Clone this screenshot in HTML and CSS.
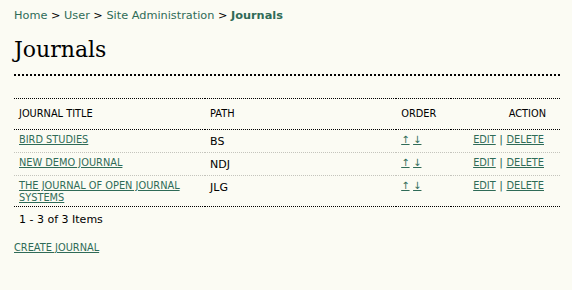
FILE: index.html
```html
<!DOCTYPE html>
<html lang="en">
<head>
    <meta charset="UTF-8">
    <title>Journals</title>
    <link rel="stylesheet" href="styles.css">
</head>
<body>
    <div id="main">
        <div id="breadcrumb">
            <a href="#">Home</a> &gt;
            <a href="#">User</a> &gt;
            <a href="#">Site Administration</a> &gt;
            <a href="#" class="current">Journals</a>
        </div>
        <h2>Journals</h2>

        <table class="listing">
            <thead>
                <tr class="heading">
                    <td class="col-title">Journal Title</td>
                    <td class="col-path">Path</td>
                    <td class="col-order">Order</td>
                    <td class="col-action">Action</td>
                </tr>
            </thead>
            <tbody>
                <tr>
                    <td><a href="#" class="action">Bird Studies</a></td>
                    <td class="path">BS</td>
                    <td><a href="#" class="arrow">&uarr;</a> <a href="#" class="arrow">&darr;</a></td>
                    <td class="actions"><a href="#" class="action">Edit</a> | <a href="#" class="action">Delete</a></td>
                </tr>
                <tr>
                    <td><a href="#" class="action">New Demo Journal</a></td>
                    <td class="path">NDJ</td>
                    <td><a href="#" class="arrow">&uarr;</a> <a href="#" class="arrow">&darr;</a></td>
                    <td class="actions"><a href="#" class="action">Edit</a> | <a href="#" class="action">Delete</a></td>
                </tr>
                <tr class="last">
                    <td><a href="#" class="action">The Journal of Open Journal Systems</a></td>
                    <td class="path">JLG</td>
                    <td><a href="#" class="arrow">&uarr;</a> <a href="#" class="arrow">&darr;</a></td>
                    <td class="actions"><a href="#" class="action">Edit</a> | <a href="#" class="action">Delete</a></td>
                </tr>
            </tbody>
        </table>
        <div class="pager">1 - 3 of 3 Items</div>

        <p class="create"><a href="#" class="action">Create Journal</a></p>
    </div>
</body>
</html>
```

FILE: styles.css
```css
body {
    margin: 0;
    background-color: #fbfbf3;
    font-family: "DejaVu Sans", Verdana, sans-serif;
    font-size: 11px;
    color: #000;
}
#main {
    padding: 8px 12px 0 14px;
}
a {
    color: #2f6b57;
}
#breadcrumb {
    font-size: 11.3px;
    line-height: 15px;
}
#breadcrumb a {
    text-decoration: none;
}
#breadcrumb a.current {
    font-weight: bold;
}
h2 {
    font-family: Georgia, "DejaVu Serif", serif;
    font-weight: normal;
    font-size: 22px;
    line-height: 28px;
    margin: 13px 0 0 0;
    padding-bottom: 10px;
    border-bottom: 2px dotted #000;
}
table.listing {
    width: 100%;
    margin-top: 22px;
    border-collapse: collapse;
    border-top: 1px dotted #000;
    border-bottom: 1px dotted #000;
}
table.listing td {
    padding: 4px 5px 2px 5px;
    line-height: 12px;
    vertical-align: top;
    border-top: 1px dotted #c4c4bc;
}
table.listing tr.heading td {
    padding: 9px 5px 9px 5px;
    font-size: 9.8px;
    text-transform: uppercase;
    border-top: none;
    border-bottom: 1px dotted #000;
}
.col-title, .col-path {
    width: 35%;
}
.col-order {
    width: 10%;
}
table.listing tr.heading td.col-action {
    width: 20%;
    text-align: right;
    padding-right: 14px;
}
table.listing td.actions {
    text-align: right;
    padding-right: 16px;
    font-size: 11px;
    color: #2f6b57;
}
a.action {
    font-size: 9.8px;
    text-transform: uppercase;
}
td.path {
    font-size: 11px;
}
table.listing td.path {
    line-height: 16px;
}
a.arrow {
    font-size: 10px;
}
.pager {
    padding: 5px 5px;
    font-size: 11px;
    line-height: 15px;
}
p.create {
    margin: 9px 0 0 0;
}
```
